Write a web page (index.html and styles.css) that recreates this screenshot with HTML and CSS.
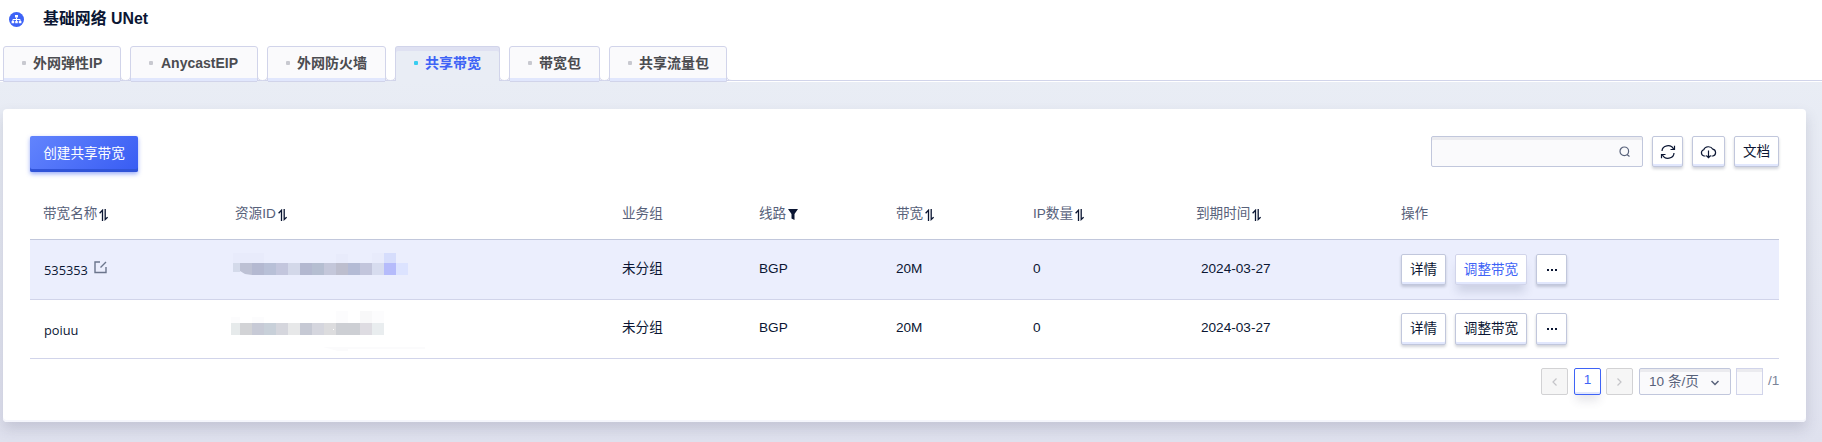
FILE: index.html
```html
<!DOCTYPE html>
<html lang="zh-CN">
<head>
<meta charset="utf-8">
<title>基础网络 UNet</title>
<link rel="stylesheet" href="styles.css">
</head>
<body>
<svg width="0" height="0" class="defs">
  <symbol id="sort" viewBox="0 0 9 12"><path d="M3.500 12V1.200L.6 4.200M6.200 0v10.500L8.600 8.200" fill="none" stroke="#0b1633" stroke-width="1.300"/></symbol>
  <symbol id="notch" viewBox="0 0 11 7"><path d="M0 6h11v1H0z" fill="#e9edf5"/><path d="M.5 0V1Q.5 5.500 5.500 5.500T10.500 1V0z" fill="#fff"/><path d="M.5 0V1Q.5 5.500 5.500 5.500T10.500 1V0" fill="none" stroke="#d1d4ea"/></symbol>
</svg>
<header class="header">
  <div class="brand">
    <svg class="logo" viewBox="0 0 15 15"><circle cx="7.500" cy="7.500" r="7.500" fill="#3e63f6"/><path d="M7.500 5.500v4M3.900 9.500V7.500h7.200v2" fill="none" stroke="#fff"/><path d="M6 3h3v2.500H6zM2.600 9h2.600v2.300H2.600zM6.200 9h2.600v2.300H6.200zM9.800 9h2.600v2.300H9.800z" fill="#fff"/></svg>
    <h1 class="title">基础网络 UNet</h1>
  </div>
  <nav class="tabs">
    <a class="tab w118">外网弹性IP</a>
    <svg class="notch"><use href="#notch"/></svg>
    <a class="tab w128 latin">AnycastEIP</a>
    <svg class="notch"><use href="#notch"/></svg>
    <a class="tab w119">外网防火墙</a>
    <svg class="notch"><use href="#notch"/></svg>
    <a class="tab w105 active">共享带宽</a>
    <svg class="notch"><use href="#notch"/></svg>
    <a class="tab w91">带宽包</a>
    <svg class="notch"><use href="#notch"/></svg>
    <a class="tab w118">共享流量包</a>
    <svg class="tail" viewBox="0 0 6 7"><path d="M.5 0V1Q.5 5.500 6 5.500V0z" fill="#fff"/><path d="M.5 0V1Q.5 5.500 6 5.500" fill="none" stroke="#d1d4ea"/></svg>
  </nav>
</header>
<main class="card">
  <div class="toolbar">
    <button class="primary">创建共享带宽</button>
    <div class="tools">
      <div class="search"><svg width="12" height="12" viewBox="0 0 12 12"><circle cx="5.300" cy="5.300" r="4.300" fill="none" stroke="#57617a" stroke-width="1.200"/><path d="M8 8.500l2.500 2" stroke="#57617a" stroke-width="1.200"/></svg></div>
      <button class="btn w31"><svg width="16" height="14" viewBox="0 0 16 14"><path d="M2 6A6 5.500 0 0 1 13.500 4M14.500.8V4.500H10.500M14 8A6 5.500 0 0 1 2.500 10M1.500 13.200V9.500H5.500" fill="none" stroke="#0b1633" stroke-width="1.200"/></svg></button>
      <button class="btn w33"><svg width="17" height="14" viewBox="0 0 17 14"><path d="M5.500 11H4A3.200 3.200 0 0 1 3.700 4.800 4.900 4.300 0 0 1 12.800 4.200 3.500 3.500 0 0 1 13 11H11.500M8.500 5.500V12.500M6.300 10.500l2.200 2.200 2.200-2.200" fill="none" stroke="#0b1633" stroke-width="1.200"/></svg></button>
      <button class="btn w45">文档</button>
    </div>
  </div>
  <div class="table">
    <div class="row head">
      <span>带宽名称<svg class="sort"><use href="#sort"/></svg></span>
      <span>资源ID<svg class="sort"><use href="#sort"/></svg></span>
      <span>业务组</span>
      <span>线路<svg class="filter" viewBox="0 0 10 11"><path d="M0 0h10L6.500 5v6L3.500 9.500V5z" fill="#0b1633"/></svg></span>
      <span>带宽<svg class="sort"><use href="#sort"/></svg></span>
      <span>IP数量<svg class="sort"><use href="#sort"/></svg></span>
      <span>到期时间<svg class="sort"><use href="#sort"/></svg></span>
      <span>操作</span>
    </div>
    <div class="row hover">
      <span class="name">535353<svg width="13" height="13" viewBox="0 0 13 13"><path d="M6 1H1v10.500h11V6M6.500 6.500L12 1" fill="none" stroke="#6b758c" stroke-width="1.400"/></svg></span>
      <span><svg class="mask" viewBox="0 0 176 23"><path d="M0 0h31v10H0zM103 1h12v9h-12zM139 0h12v10h-12z" fill="#e8ebfb"/><path d="M0 10h7v9H0z" fill="#d4daea"/><path d="M7 10h12v12l-7-1-5-3z" fill="#bdc1d4"/><path d="M19 10h12v12H19z" fill="#b4b9d1"/><path d="M31 10h12v12H31z" fill="#b8c0d7"/><path d="M43 10h12v12H43z" fill="#c3c6dd"/><path d="M55 10h12v12H55z" fill="#d3d8e9"/><path d="M67 10h12v12H67z" fill="#b3b8d0"/><path d="M79 10h12v12H79z" fill="#b5bed1"/><path d="M91 10h12v12H91z" fill="#c4c7da"/><path d="M103 10h12v12h-12z" fill="#bdbece"/><path d="M115 10h12v12h-12z" fill="#b4bbd5"/><path d="M127 10h12v12h-12z" fill="#c2c5dc"/><path d="M139 10h12v12h-12z" fill="#d7dcef"/><path d="M151 0h12v10h-12z" fill="#d6ddfc"/><path d="M151 10h12v12h-12z" fill="#b5bbfb"/><path d="M163 10h12v12h-12z" fill="#dce3ff"/></svg></span>
      <span>未分组</span><span>BGP</span><span>20M</span><span>0</span><span class="date">2024-03-27</span>
      <span class="actions"><button class="btn w45">详情</button><button class="btn w72 focus">调整带宽</button><button class="btn w31"><i class="dots"></i></button></span>
    </div>
    <div class="row last">
      <span class="name">poiuu</span>
      <span><svg class="mask second" viewBox="0 0 194 42"><path d="M0 6h9v6H0zM21 6h12v6H21zM105 0h12v12h-12zM141 0h12v12h-12z" fill="#fcfcfd"/><path d="M129 0h12v12h-12z" fill="#f8f8f9"/><path d="M0 12h9v12H0z" fill="#e6eaeb"/><path d="M9 12h12v12H9z" fill="#d2d3d6"/><path d="M21 12h12v12H21z" fill="#c7cad6"/><path d="M33 12h12v12H33z" fill="#c8d0d9"/><path d="M45 12h12v12H45z" fill="#d5d6dd"/><path d="M57 12h12v12H57z" fill="#e7e8e9"/><path d="M69 12h12v12H69z" fill="#c6c9d4"/><path d="M81 12h12v12H81z" fill="#d5d6de"/><path d="M93 12h12v12H93z" fill="#dcdcde"/><path d="M105 12h24v12h-24z" fill="#cdcfd4"/><path d="M129 12h12v12h-12z" fill="#dedce2"/><path d="M141 12h12v12h-12z" fill="#e9edef"/><path d="M102 18h1v1h-1z" fill="#fff"/><path d="M92 36h102v2h-77v2h-10z" fill="#fbfbfc"/></svg></span>
      <span>未分组</span><span>BGP</span><span>20M</span><span>0</span><span class="date">2024-03-27</span>
      <span class="actions"><button class="btn w45">详情</button><button class="btn w72">调整带宽</button><button class="btn w31"><i class="dots"></i></button></span>
    </div>
  </div>
  <div class="pager">
    <span class="page off"><svg width="5" height="8" viewBox="0 0 5 8"><path d="M4.500.5L1 4l3.500 3.500" fill="none" stroke="#c4c4c8" stroke-width="1.200"/></svg></span>
    <span class="page current">1</span>
    <span class="page off"><svg width="5" height="8" viewBox="0 0 5 8"><path d="M.5.5L4 4 .5 7.500" fill="none" stroke="#c4c4c8" stroke-width="1.200"/></svg></span>
    <span class="size">10 条/页<svg width="8" height="6" viewBox="0 0 8 6"><path d="M.5 1L4 4.500 7.500 1" fill="none" stroke="#57617a" stroke-width="1.500"/></svg></span>
    <span class="jump"></span>
    <span class="total">/1</span>
  </div>
</main>
</body>
</html>
```
FILE: styles.css
```css
* { box-sizing: border-box; }
body { margin: 0; height: 442px; overflow: hidden; background: linear-gradient(#e9edf5 80px, #dfe1ee 442px); font: 13.6px/20px "Liberation Sans", "Noto Sans CJK SC", sans-serif; color: #0b1633; }
.defs { display: block; position: absolute; }
.header { height: 82px; background: #fff; display: flex; flex-direction: column; justify-content: space-between; }
.brand { display: flex; align-items: center; gap: 19px; padding: 7px 0 0 9px; height: 31px; }
.logo { width: 15px; height: 15px; margin-top: 1px; }
.title { margin: 0; font-size: 15.9px; line-height: 22px; font-weight: 600; }
.tabs { display: flex; align-items: flex-end; padding-left: 3px; height: 36px; background: linear-gradient(#d1d4ea, #d1d4ea) 0 34px / 100% 1px no-repeat; }
.tab { position: relative; height: 36px; border: 1px solid #d1d4ea; border-radius: 3px 3px 0 0; background: #fafafc; box-shadow: inset 0 -3px #e1e7fd; font-size: 14px; font-weight: 600; color: #4b4c50; padding: 6px 0 0 29px; white-space: nowrap; }
.latin { padding-left: 30px; }
.tab::before { content: ""; position: absolute; left: 18px; top: 14px; width: 4px; height: 4px; border-radius: 1px; background: #c8c9d0; }
.active { background: #e9edf5; color: #3e63f6; box-shadow: inset 0 4px #dfe1f2; border-bottom-color: #e9edf5; }
.active::before { background: #37cdf0; }
.notch { width: 11px; height: 7px; margin: 0 -1px; z-index: 1; }
.tail { width: 6px; height: 7px; margin-left: -1px; z-index: 1; }
.w118 { width: 118px; } .w128 { width: 128px; } .w119 { width: 119px; } .w105 { width: 105px; } .w91 { width: 91px; }
.card { margin: 27px 16px 0 3px; height: 313px; padding: 27px 27px 0; background: #fff; border-radius: 4px; box-shadow: 0 7px 14px rgba(60,60,90,.17), inset 0 -2px #f5f6fc; }
.toolbar { display: flex; justify-content: space-between; height: 61px; }
button { font: inherit; color: inherit; padding: 0; margin: 0; white-space: nowrap; }
.primary { width: 108px; height: 36px; border: 0; border-radius: 2px; color: #fff; background: linear-gradient(135deg, #6284fd, #385cf3); box-shadow: 0 2px 4px rgba(56,92,243,.5), inset 0 -3px #3154d8; padding-bottom: 1px; }
.tools { display: flex; gap: 9px; }
.search { width: 212px; height: 31px; border: 1px solid #c1c7dc; border-radius: 2px; background: #fafafc; box-shadow: inset 0 3px #ebebef; display: flex; align-items: center; justify-content: flex-end; padding-right: 11px; }
.btn { height: 31px; border: 1px solid #c1c7dc; border-radius: 2px; background: #fff; box-shadow: inset 0 -2px #e1e7fd, 0 2px 3px rgba(30,40,70,.2); display: flex; align-items: center; justify-content: center; }
.w31 { width: 31px; } .w33 { width: 33px; } .w45 { width: 45px; } .w72 { width: 72px; }
.focus { color: #3e63f6; border-color: #d1d4ea; box-shadow: inset 0 -2px #e1e7fd, 0 9px 10px -2px rgba(60,70,110,.17); }
.row { display: grid; grid-template-columns: 192px 387px 137px 137px 137px 163px 205px 1fr; padding-left: 13px; height: 59px; border-bottom: 1px solid #d1d4ea; align-items: center; }
.row > span { position: relative; top: -1px; white-space: nowrap; }
.head { height: 43px; align-items: start; color: #57617a; border-color: #c1c7dc; }
.row.head > span { top: 7px; }
.hover { height: 60px; background: #ebeefd; }
.sort { width: 9px; height: 12px; margin-left: 2px; vertical-align: -3px; }
.filter { width: 10px; height: 11px; margin-left: 2px; vertical-align: -2px; }
.row > .name { font: 12.8px/20px "Open Sans", "Noto Sans", sans-serif; top: 0; padding-left: 1px; }
.row.last > .name { top: 1px; }
.name svg { margin-left: 6px; vertical-align: 1px; }
.mask { display: block; width: 176px; height: 23px; margin: -8px 0 0 -2px; }
.second { width: 194px; height: 42px; margin: 7px 0 0 -4px; }
.date { padding-left: 5px; }
.row > .actions { display: flex; gap: 9px; top: 0; }
.last .btn { height: 32px; }
.dots { width: 2px; height: 2px; background: #0b1633; box-shadow: -4px 0 #0b1633, 4px 0 #0b1633; }
.pager { display: flex; justify-content: flex-end; height: 27px; margin-top: 9px; color: #57617a; }
.page { width: 27px; height: 27px; border: 1px solid #d2d2d4; border-radius: 2px; background: #f6f6f6; display: flex; align-items: center; justify-content: center; }
.current { margin: 0 5px 0 6px; border-color: #3e63f6; background: #fff; color: #3e63f6; padding-bottom: 3px; box-shadow: inset 0 -2px #e1e7fd, 0 8px 10px -2px rgba(60,60,90,.12); }
.size { width: 92px; margin: 0 5px 0 6px; border: 1px solid #c1c7dc; border-radius: 2px; background: #fafafc; box-shadow: inset 0 3px #ebebef; padding: 3px 0 0 9px; white-space: nowrap; }
.size svg { margin-left: 12px; }
.jump { width: 27px; border: 1px solid #d1d4ea; background: #fafafc; box-shadow: inset 0 3px #ebebef; }
.total { width: 11px; margin-left: 5px; padding-top: 3px; color: #7b8398; }
```
